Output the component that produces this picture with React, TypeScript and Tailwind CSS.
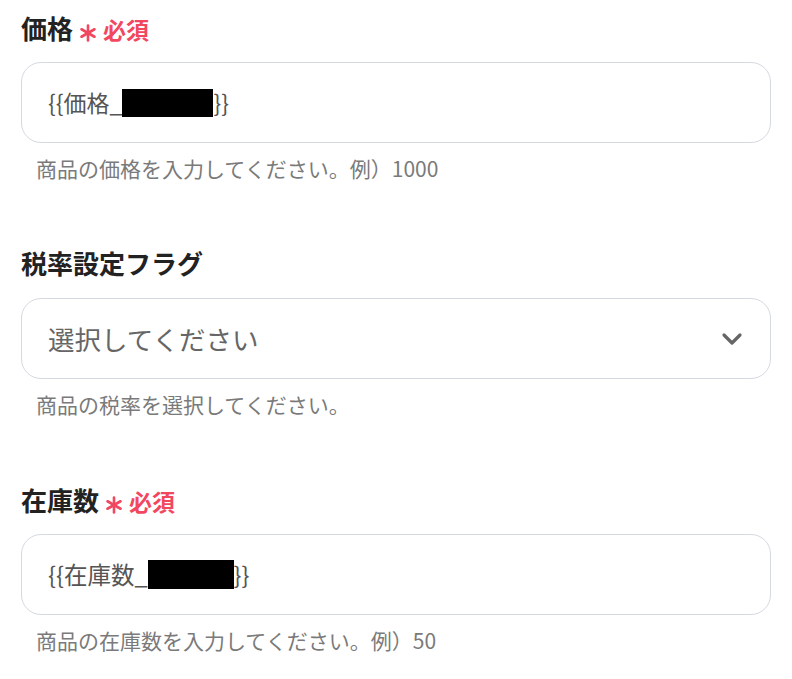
const font = "font-['Noto_Sans_CJK_JP','Noto_Sans',sans-serif]";

const Asterisk = () => (
  <svg width="18" height="18" viewBox="0 0 18 18" className="mt-[10px]">
    <g stroke="#f1475f" strokeWidth="2.6" strokeLinecap="round">
      <line x1="9" y1="1.5" x2="9" y2="16.5" />
      <line x1="2.5" y1="5.25" x2="15.5" y2="12.75" />
      <line x1="2.5" y1="12.75" x2="15.5" y2="5.25" />
    </g>
  </svg>
);

const Label = ({ text, required }: { text: string; required?: boolean }) => (
  <div className="flex items-center h-[34px]">
    <span className="text-[26px] font-bold text-[#222] leading-[34px]">{text}</span>
    {required && (
      <span className="flex items-center ml-[6px] text-[#f1475f] font-bold">
        <Asterisk />
        <span className="text-[23px] ml-[6px] leading-none mt-[2px]">必須</span>
      </span>
    )}
  </div>
);

const Help = ({ children }: { children: React.ReactNode }) => (
  <p className="mt-[12px] pl-[15px] text-[21px] leading-[26px] text-[#7a7a7a]">{children}</p>
);

export default function App() {
  return (
    <div className={`${font} w-[792px] h-[679px] bg-white px-[21px] pt-[11px]`}>
      {/* 価格 */}
      <Label text="価格" required />
      <div className="mt-[17px] h-[81px] rounded-[20px] border border-[#d5d9e0] flex items-center pl-[26px]">
        <span className="text-[23px] text-[#555] flex items-center">
          {"{{価格_"}
          <span className="inline-block w-[91px] h-[28px] bg-black" />
          {"}}"}
        </span>
      </div>
      <Help>商品の価格を入力してください。例）1000</Help>

      {/* 税率設定フラグ */}
      <div className="mt-[65px]">
        <Label text="税率設定フラグ" />
      </div>
      <div className="mt-[18px] h-[81px] rounded-[20px] border border-[#d5d9e0] flex items-center justify-between pl-[26px] pr-[26px]">
        <span className="text-[26.5px] text-[#666]">選択してください</span>
        <svg width="22" height="14" viewBox="0 0 22 14" className="mr-[1px]">
          <path d="M3 3 L11 11 L19 3" fill="none" stroke="#666" strokeWidth="3.2" strokeLinecap="round" strokeLinejoin="round" />
        </svg>
      </div>
      <Help>商品の税率を選択してください。</Help>

      {/* 在庫数 */}
      <div className="mt-[66px]">
        <Label text="在庫数" required />
      </div>
      <div className="mt-[17px] h-[81px] rounded-[20px] border border-[#d5d9e0] flex items-center pl-[26px]">
        <span className="text-[23.5px] text-[#555] flex items-center">
          {"{{在庫数_"}
          <span className="inline-block w-[86px] h-[29px] bg-black" />
          {"}}"}
        </span>
      </div>
      <Help>商品の在庫数を入力してください。例）50</Help>
    </div>
  );
}
